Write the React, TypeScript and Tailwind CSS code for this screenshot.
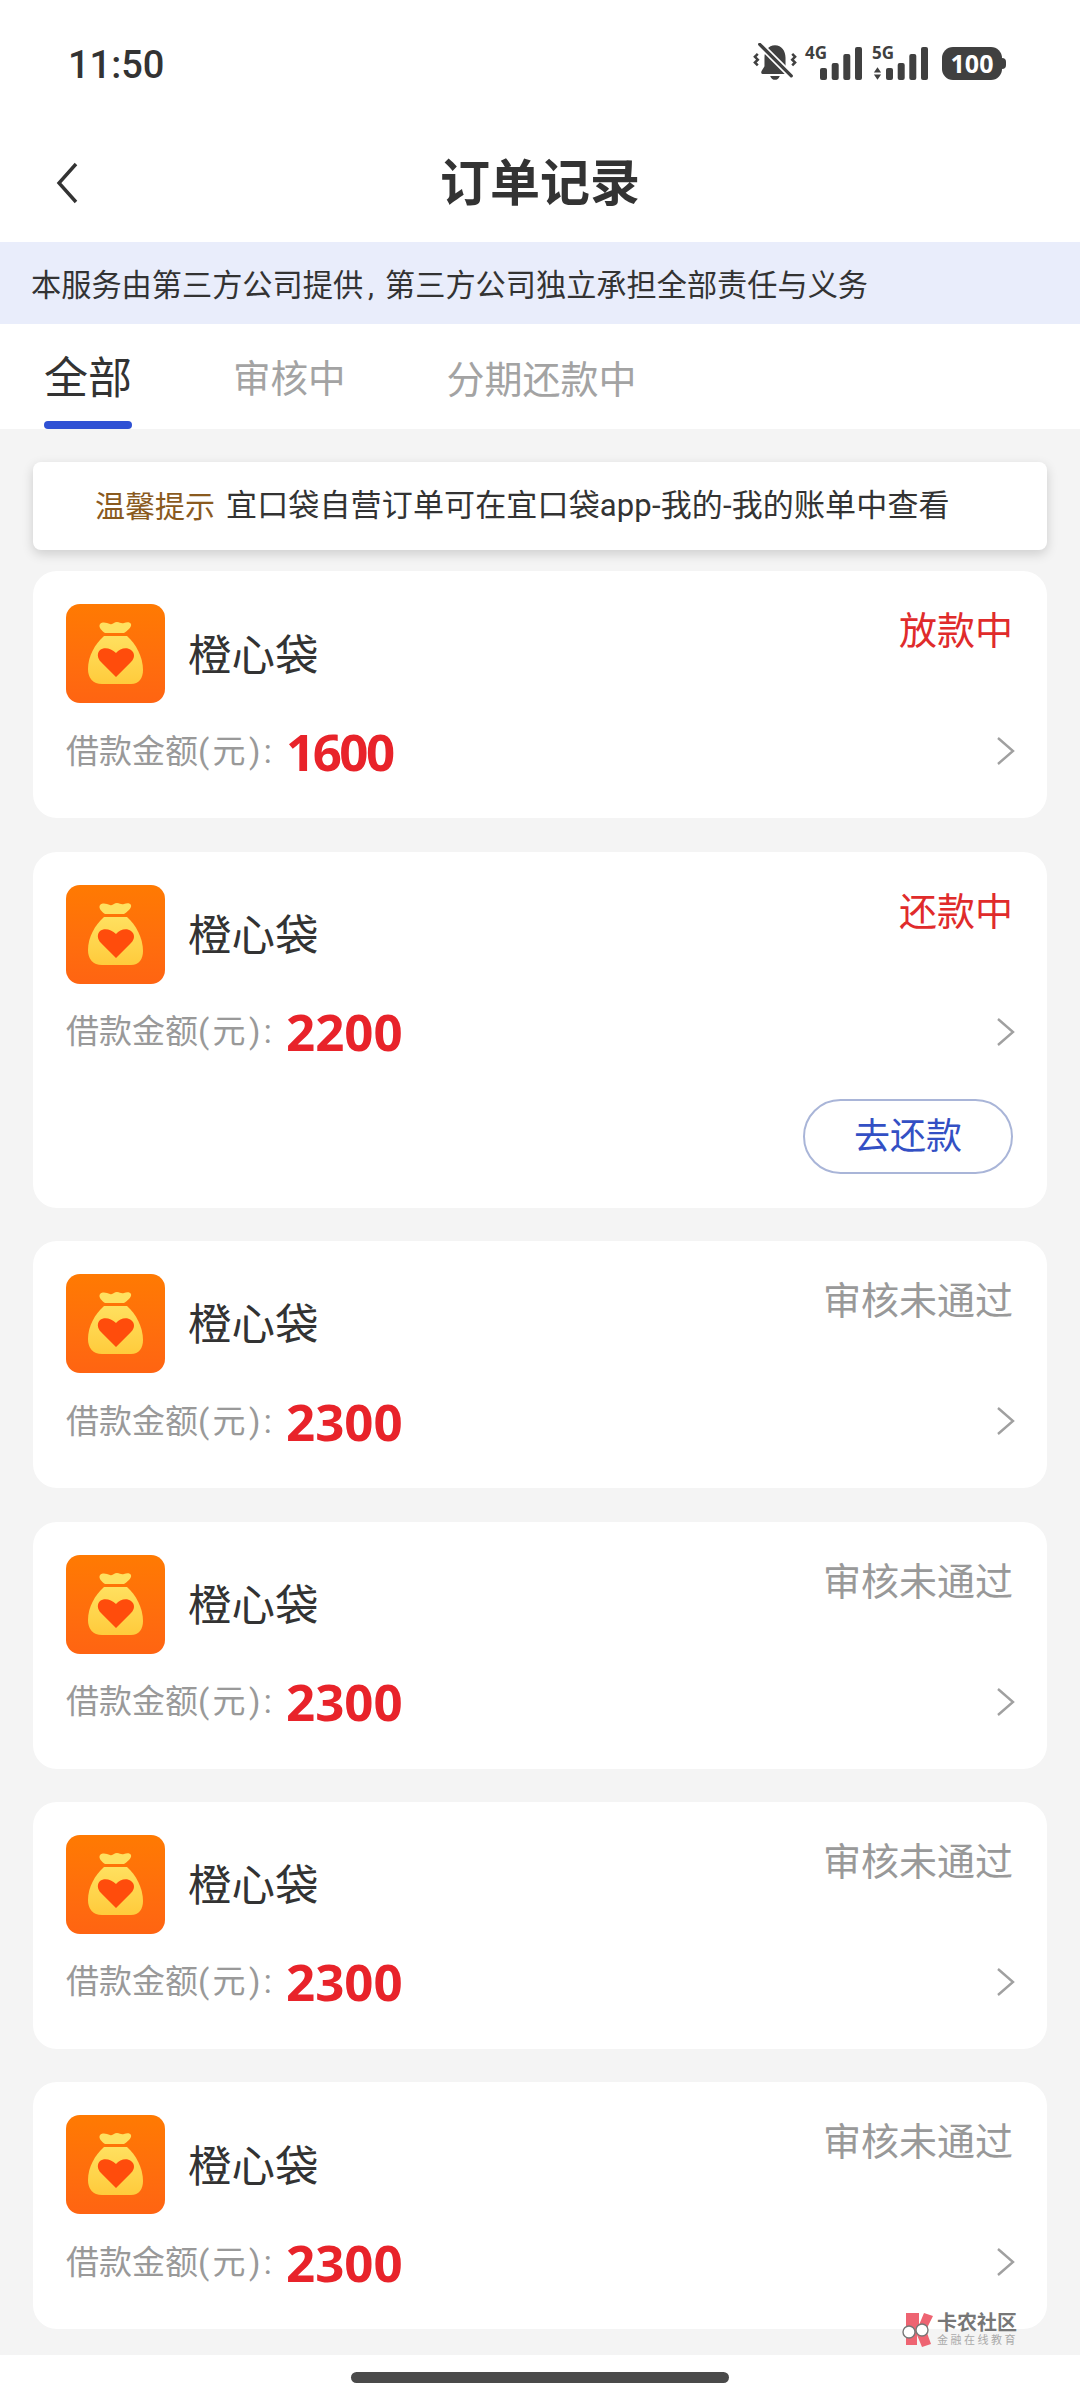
import React from 'react';

const cjk = "font-['Roboto','Noto_Sans_CJK_SC',sans-serif]";

type Order = {
  amount: string;
  amountClass?: string;
  status: string;
  statusClass: string;
  action?: string;
};

const orders: Order[] = [
  { amount: '1600', amountClass: 'tracking-[-2.5px]', status: '放款中', statusClass: 'text-[#e02b2b]' },
  { amount: '2200', status: '还款中', statusClass: 'text-[#e02b2b]', action: '去还款' },
  { amount: '2300', status: '审核未通过', statusClass: 'text-[#999999]' },
  { amount: '2300', status: '审核未通过', statusClass: 'text-[#999999]' },
  { amount: '2300', status: '审核未通过', statusClass: 'text-[#999999]' },
  { amount: '2300', status: '审核未通过', statusClass: 'text-[#999999]' },
];

const BagIcon = () => (
  <div className="h-[99px] w-[99px] shrink-0 overflow-hidden rounded-[14px] bg-gradient-to-b from-[#ff7a02] to-[#ff6412]">
    <svg viewBox="0 0 99 99" className="h-full w-full">
      <defs>
        <linearGradient id="bag" x1="0" y1="0" x2="0" y2="1">
          <stop offset="0" stopColor="#ffe05f" />
          <stop offset="1" stopColor="#ffcb3c" />
        </linearGradient>
      </defs>
      <path d="M34 20c3-3 7-1 10 0 3 1 4-2 7-2 3 0 4 2 7 1 3-1 6-1 7 1 1 3-4 7-7 9l-19 0c-3-2-7-6-5-9z" fill="#ffe05f" />
      <path d="M38 32c-9 8-16 20-16 33 0 9 5 15 14 15h29c8 0 12-6 12-14 0-13-7-26-16-34z" fill="url(#bag)" />
      <path d="M50 73 35 58c-4-4-4-9-1-12 4-3 11-2 16 3 4-5 11-6 15-3 4 3 4 8 0 12z" fill="#ff4c0c" />
    </svg>
  </div>
);

const Chevron = ({ className }: { className?: string }) => (
  <svg viewBox="0 0 20 30" className={className} fill="none" stroke="currentColor" strokeWidth="2.4">
    <path d="M2 2l15 13L2 28" />
  </svg>
);

const Signal = () => (
  <svg viewBox="0 0 42 33" className="h-[33px] w-[42px]" fill="#404040">
    <rect x="0" y="21" width="7" height="12" rx="2" />
    <rect x="11.7" y="16" width="7" height="17" rx="2" />
    <rect x="23.3" y="7" width="7" height="26" rx="2" />
    <rect x="35" y="0" width="7" height="33" rx="2" />
  </svg>
);

const StatusBar = () => (
  <div className="flex h-[126px] shrink-0 items-center justify-between pl-[68px] pr-[74px] pt-[4px]">
    <span className="font-['Roboto',sans-serif] text-[38px] font-medium leading-none text-[#333333]">11:50</span>
    <div className="mb-[8px] flex items-end">
      <svg viewBox="0 0 46 40" className="-mb-[2px] h-[39px] w-[44px]" fill="#404040" stroke="none">
        <path d="M23 2c7 0 11 6 11 13v9l3 5c1 2 0 3-2 3H11c-2 0-3-1-2-3l3-5v-9C12 8 16 2 23 2z" />
        <path d="M18 34h10c-1 3-3 4-5 4s-4-1-5-4z" />
        <path d="M7 1l33 33" stroke="#ffffff" strokeWidth="7" />
        <path d="M7 1l33 33" stroke="#404040" strokeWidth="3.4" strokeLinecap="round" />
        <path d="M5 11l-3 3 3 3-3 3 3 3" fill="none" stroke="#404040" strokeWidth="2.6" />
        <path d="M41 11l3 3-3 3 3 3-3 3" fill="none" stroke="#404040" strokeWidth="2.6" />
      </svg>
      <div className="relative ml-[8px] h-[33px] w-[57px]">
        <span className="absolute left-0 top-[-3px] font-['Open_Sans',sans-serif] text-[17px] font-bold leading-none text-[#404040]">4G</span>
        <div className="absolute bottom-0 right-0"><Signal /></div>
      </div>
      <div className="relative ml-[10px] h-[33px] w-[56px]">
        <span className="absolute left-0 top-[-3px] font-['Open_Sans',sans-serif] text-[17px] font-bold leading-none text-[#404040]">5G</span>
        <div className="absolute bottom-0 right-0"><Signal /></div>
        <svg viewBox="0 0 10 14" className="absolute bottom-0 left-[1px] h-[13px] w-[9px]" fill="#404040">
          <path d="M5 0l4 6H1zM5 14l-4-6h8z" />
        </svg>
      </div>
      <div className="relative ml-[14px] mr-[4px] flex h-[33px] w-[60px] items-center justify-center rounded-[11px] bg-[#404040]">
        <span className="font-['Open_Sans',sans-serif] text-[25px] font-bold leading-none text-white">100</span>
        <span className="absolute right-[-4px] top-[11px] h-[11px] w-[4px] rounded-r-sm bg-[#404040]" />
      </div>
    </div>
  </div>
);

const OrderCard = ({ order }: { order: Order }) => (
  <div className={`rounded-[24px] bg-white pl-[33px] pr-[34px] pt-[33px] ${order.action ? 'pb-[34px]' : 'pb-[42px]'}`}>
    <div className="flex items-center justify-between">
      <div className="flex items-center gap-[23px]">
        <BagIcon />
        <span className="mt-[5px] text-[43.5px] leading-none text-[#333333]">橙心袋</span>
      </div>
      <span className={`mt-[8px] self-start text-[38px] leading-none ${order.statusClass}`}>{order.status}</span>
    </div>
    <div className="mt-[23px] flex h-[50px] items-center justify-between">
      <div className="flex items-center">
        <span className="w-[220px] whitespace-nowrap text-[33px] leading-none text-[#999999]">
          借款金额<span className="tracking-[3.3px]">(元):</span>
        </span>
        <span className={`font-['Noto_Sans',sans-serif] text-[51px] font-bold leading-none text-[#e8232a] ${order.amountClass ?? ''}`}>
          {order.amount}
        </span>
      </div>
      <Chevron className="-mr-[3px] h-[30px] w-[20px] text-[#a0a0a0]" />
    </div>
    {order.action && (
      <div className="mt-[42px] flex justify-end">
        <div className="flex h-[75px] w-[210px] items-center justify-center rounded-full border-2 border-[#a9b5d8] pt-[1px] text-[36px] text-[#3350c4]">
          {order.action}
        </div>
      </div>
    )}
  </div>
);

export default function App() {
  return (
    <div className={`relative flex h-[2400px] w-[1080px] flex-col overflow-hidden bg-white ${cjk}`}>
      <StatusBar />
      <div className="relative flex h-[116px] shrink-0 items-center justify-center">
        <svg viewBox="0 0 24 42" className="absolute left-[55px] top-[36px] h-[42px] w-[24px]" fill="none" stroke="#333333" strokeWidth="3.4">
          <path d="M21 2 4 21l17 19" />
        </svg>
        <span className="text-[50px] font-bold leading-none text-[#333333]">订单记录</span>
      </div>
      <div className="flex h-[82px] shrink-0 items-center bg-[#e9edfb] pl-[31px] pt-[7px] text-[30.2px] leading-none text-[#333333]">
        <span>
          本服务由第三方公司提供<span className="pl-[5px] pr-[11px]">,</span>第三方公司独立承担全部责任与义务
        </span>
      </div>
      <div className="flex h-[105px] shrink-0 pl-[44px]">
        <div className="flex w-[88px] flex-col items-center justify-between">
          <span className="pt-[33px] text-[44px] leading-none text-[#333333]">全部</span>
          <span className="h-[8px] w-full rounded-full bg-[#2f51d4]" />
        </div>
        <span className="ml-[101px] pt-[37px] text-[37.5px] leading-none text-[#a3a3a3]">审核中</span>
        <span className="ml-[101px] pt-[37px] text-[38px] leading-none text-[#a3a3a3]">分期还款中</span>
      </div>
      <div className="flex flex-1 flex-col gap-[33.4px] bg-[#f4f4f4] px-[33px] pt-[33px]">
        <div className="-mb-[12px] flex h-[88px] shrink-0 items-center rounded-[8px] bg-white pl-[62px] shadow-[0_4px_12px_rgba(0,0,0,0.16)]">
          <span className="text-[30px] text-[#8a5a1e]">温馨提示</span>
          <span className="ml-[11px] text-[31px] tracking-[0.15px] text-[#333333]">宜口袋自营订单可在宜口袋app-我的-我的账单中查看</span>
        </div>
        {orders.map((order, index) => (
          <OrderCard key={index} order={order} />
        ))}
      </div>
      <div className="flex h-[45px] shrink-0 items-center justify-center bg-white">
        <span className="h-[11px] w-[378px] rounded-full bg-[#4a4a4a]" />
      </div>
      <div className="absolute left-[900px] top-[2312px] flex items-center gap-[3px]">
        <svg viewBox="0 0 34 36" className="h-[36px] w-[34px]">
          <path d="M6 1h13v12L24 1l9 3-7 14 5 14-9 3-5-12v10H6z" fill="#ee6472" />
          <circle cx="9" cy="20" r="6" fill="#fff" stroke="#777" strokeWidth="1.4" />
          <circle cx="22" cy="18" r="6" fill="#fff" stroke="#777" strokeWidth="1.4" />
        </svg>
        <div className="flex flex-col">
          <span className="text-[20px] font-bold leading-[22px] text-[#777777]">卡农社区</span>
          <span className="text-[11px] leading-[14px] tracking-[2.5px] text-[#aaaaaa]">金融在线教育</span>
        </div>
      </div>
    </div>
  );
}
